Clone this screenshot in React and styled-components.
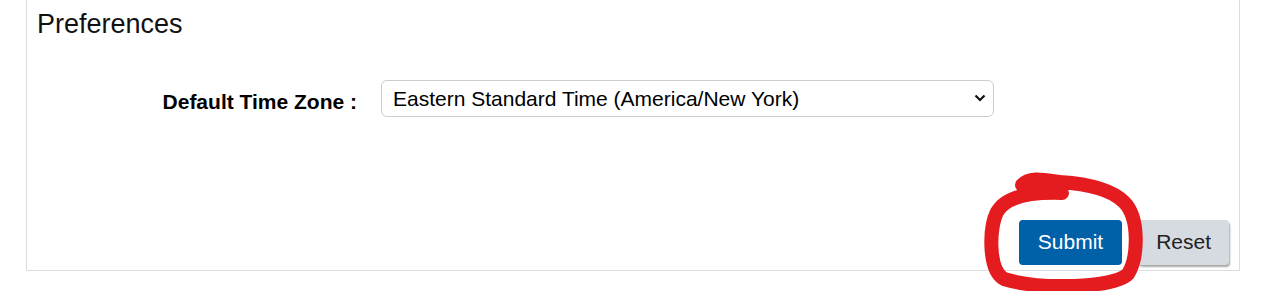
import React from 'react';
import styled, { createGlobalStyle } from 'styled-components';

const GlobalStyle = createGlobalStyle`
    html, body {
        margin: 0;
        padding: 0;
        background: #ffffff;
        font-family: "Liberation Sans", Arial, sans-serif;
    }
`;

const Page = styled.div`
    position: relative;
    width: 1272px;
    height: 291px;
    overflow: hidden;
`;

const Panel = styled.section`
    box-sizing: border-box;
    margin-left: 26px;
    width: 1214px;
    border: 1px solid #dcdcdc;
    border-top: none;
    padding: 8px 10px 5px 10px;
`;

const Title = styled.h2`
    margin: 0;
    font-size: 27px;
    line-height: 32px;
    font-weight: normal;
    color: #111;
`;

const FieldRow = styled.div`
    display: grid;
    grid-template-columns: 320px 613px;
    column-gap: 24px;
    align-items: center;
    margin-top: 40px;
`;

const Label = styled.label`
    text-align: right;
    font-size: 21px;
    font-weight: bold;
    color: #000;
    padding-top: 7px;
`;

const SelectWrap = styled.div`
    position: relative;
    width: 613px;
    height: 37px;
`;

const Select = styled.select`
    box-sizing: border-box;
    width: 100%;
    height: 100%;
    appearance: none;
    -webkit-appearance: none;
    border: 1px solid #cccccc;
    border-radius: 6px;
    background: #fff;
    padding: 0 30px 0 11px;
    font-family: "Liberation Sans", Arial, sans-serif;
    font-size: 21px;
    color: #000;
`;

const Chevron = styled.svg`
    position: absolute;
    right: 7px;
    top: 13px;
    pointer-events: none;
`;

const Actions = styled.div`
    display: flex;
    justify-content: flex-end;
    gap: 16px;
    margin-top: 103px;
`;

const Button = styled.button`
    box-sizing: border-box;
    height: 45px;
    padding: 0 ${p => (p.$primary ? 19 : 18)}px 2px;
    border: none;
    border-radius: 4px;
    font-family: "Liberation Sans", Arial, sans-serif;
    font-size: 21px;
    background: ${p => (p.$primary ? '#0061a8' : '#d5dbe0')};
    color: ${p => (p.$primary ? '#ffffff' : '#222')};
    box-shadow: ${p => (p.$primary ? 'none' : '1px 2px 2px rgba(0,0,0,0.35)')};
`;

const Scribble = styled.svg`
    position: absolute;
    left: 0;
    top: 0;
    pointer-events: none;
`;

const App = () => (
    <Page>
        <GlobalStyle />
        <Panel>
            <Title>Preferences</Title>
            <FieldRow>
                <Label htmlFor="tz">Default Time Zone :</Label>
                <SelectWrap>
                    <Select id="tz" defaultValue="ny">
                        <option value="ny">Eastern Standard Time (America/New York)</option>
                    </Select>
                    <Chevron width="14" height="10" viewBox="0 0 14 10">
                        <path d="M 2.5 2.5 L 7 7 L 11.5 2.5" fill="none" stroke="#111" strokeWidth="2.2" />
                    </Chevron>
                </SelectWrap>
            </FieldRow>
            <Actions>
                <Button $primary>Submit</Button>
                <Button>Reset</Button>
            </Actions>
        </Panel>
        <Scribble width="1272" height="291" viewBox="0 0 1272 291">
            <path
                d="M 1022 185 C 1030 176, 1045 180, 1060 182 C 1090 184, 1112 190, 1124 202 C 1140 218, 1138 258, 1128 274 C 1114 288, 1040 290, 1004 279 C 988 270, 989 228, 997 212 C 1006 196, 1030 192, 1062 193"
                fill="none"
                stroke="#e41b1f"
                strokeWidth="14"
                strokeLinecap="round"
                strokeLinejoin="round"
            />
        </Scribble>
    </Page>
);

export default App;
